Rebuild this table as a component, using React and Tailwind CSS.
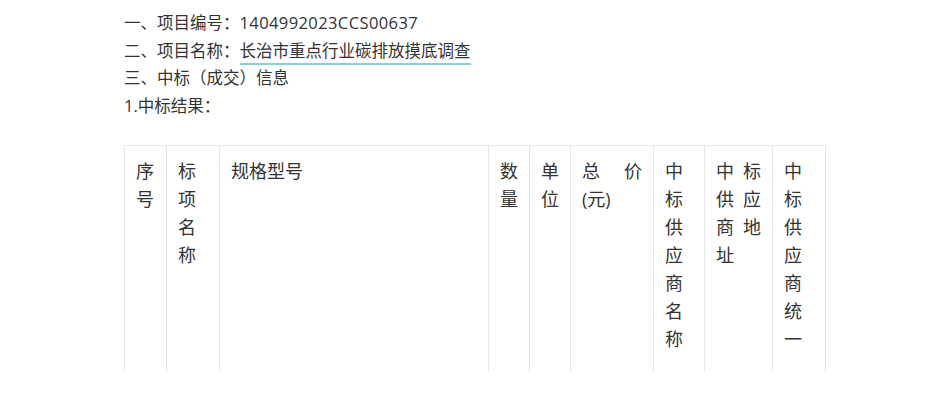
import React from 'react'

const cols = [
  { w: 42, text: '序号' },
  { w: 53, text: '标项名称' },
  { w: 269, text: '规格型号' },
  { w: 41, text: '数量' },
  { w: 41, text: '单位' },
  { w: 83, text: '总价(元)' },
  { w: 51, text: '中标供应商名称' },
  { w: 68, text: '中标供应商地址' },
  { w: 53, text: '中标供应商统一' },
]

function App() {
  return (
    <div
      className="w-[950px] h-[418px] bg-white text-[#333] text-[16.5px] overflow-hidden"
      style={{ fontFamily: '"Open Sans", "Noto Sans CJK SC", sans-serif' }}
    >
      <div className="pl-[124px] pt-[9px] leading-[27.5px]">
        <p>
          一、项目编号：<span className="tracking-[0.4px]">1404992023CCS00637</span>
        </p>
        <p>
          二、项目名称：
          <span className="border-b-2 border-[#8ccfd9] pb-[1px]">长治市重点行业碳排放摸底调查</span>
        </p>
        <p>三、中标（成交）信息</p>
        <p>1.中标结果：</p>

        {/* table is cut off at the bottom */}
        <div className="mt-[26px] h-[227px] w-[702px] overflow-hidden">
          <table className="table-fixed border-collapse w-[701px]">
            <colgroup>
              {cols.map((c, i) => (
                <col key={i} style={{ width: c.w }} />
              ))}
            </colgroup>
            <thead>
              <tr>
                {cols.map((c, i) => (
                  <th
                    key={i}
                    className="border border-[#e8e8e8] px-[11px] pt-[11px] pb-[40px] align-top text-justify font-normal text-[18px] leading-[28px] break-all"
                  >
                    {c.text}
                  </th>
                ))}
              </tr>
            </thead>
          </table>
        </div>
      </div>
    </div>
  )
}

export default App
